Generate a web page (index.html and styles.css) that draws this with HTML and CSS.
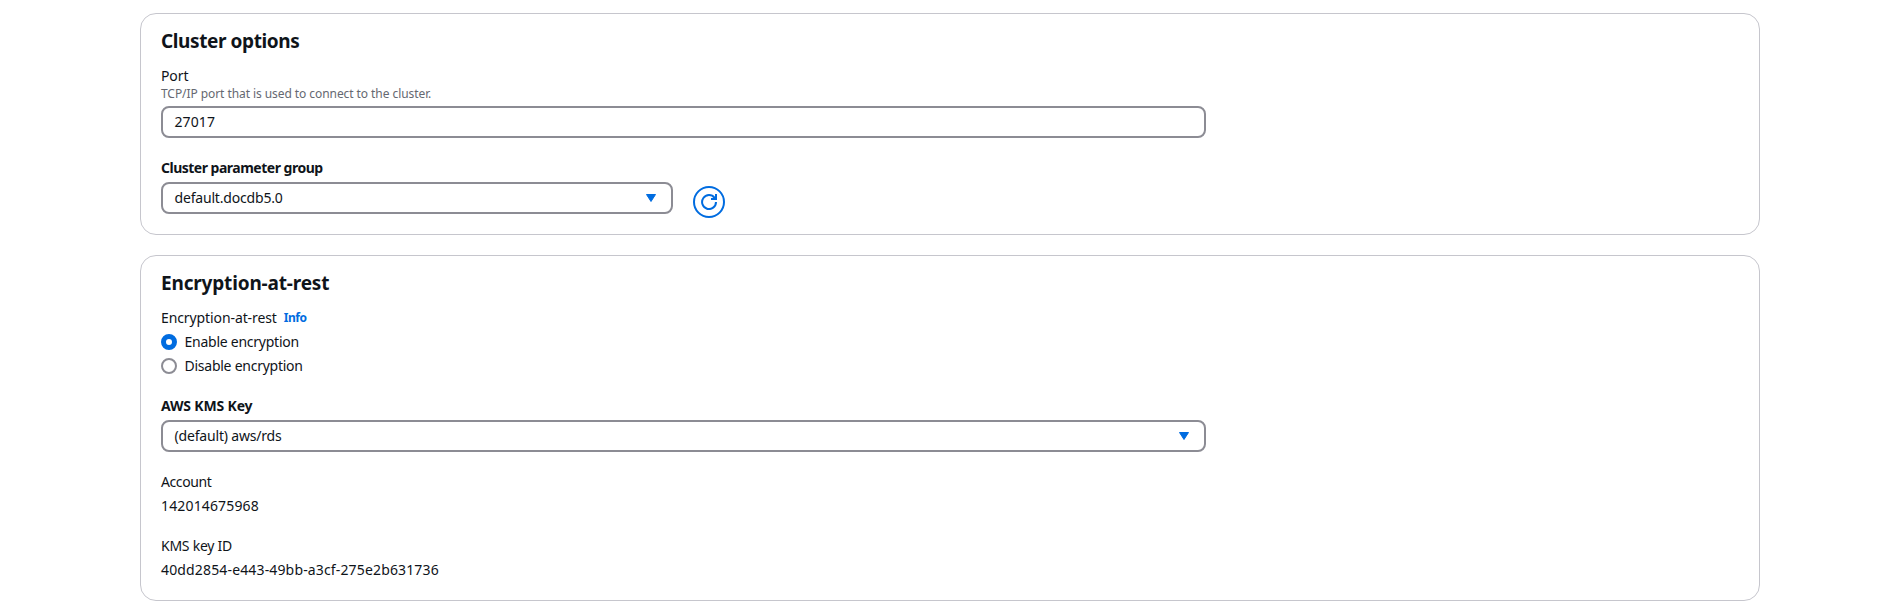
FILE: index.html
```html
<!DOCTYPE html>
<html lang="en">
<head>
<meta charset="utf-8">
<title>Create cluster</title>
<link rel="stylesheet" href="styles.css">
</head>
<body>
<main class="page">
  <section class="card card-options">
    <h2 class="title title-options">Cluster options</h2>
    <div class="field">
      <label class="label">Port</label>
      <p class="hint">TCP/IP port that is used to connect to the cluster.</p>
      <div class="control"><span class="digits">27017</span></div>
    </div>
    <div class="group-row">
      <div class="field group-field">
        <label class="label strong group-label">Cluster parameter group</label>
        <div class="control"><span>default.docdb5.0</span><svg class="caret" width="10" height="8" viewBox="0 0 10 8"><path d="M0.5 0.5h9L5 7.5z"/></svg></div>
      </div>
      <button class="refresh" aria-label="Refresh"><svg width="16" height="16" viewBox="0 0 16 16"><path d="M10 5h5V0"/><path d="M15 8a6.95 7 0 1 1-1.4-4.2L15 5"/></svg></button>
    </div>
  </section>
  <section class="card">
    <h2 class="title">Encryption-at-rest</h2>
    <div class="label encrypt-label"><span>Encryption-at-rest</span><a class="info">Info</a></div>
    <div class="radios">
      <div class="radio"><span class="dot checked"></span><span>Enable encryption</span></div>
      <div class="radio"><span class="dot"></span><span>Disable encryption</span></div>
    </div>
    <div class="field spaced">
      <label class="label strong">AWS KMS Key</label>
      <div class="control"><span>(default) aws/rds</span><svg class="caret" width="10" height="8" viewBox="0 0 10 8"><path d="M0.5 0.5h9L5 7.5z"/></svg></div>
    </div>
    <div class="pair spaced"><span class="account">Account</span><span class="digits">142014675968</span></div>
    <div class="pair spaced"><span class="key-name">KMS key ID</span><span class="digits">40dd2854-e443-49bb-a3cf-275e2b631736</span></div>
  </section>
</main>
</body>
</html>
```
FILE: styles.css
```css
* { box-sizing: border-box; }
body { margin: 0; background: #fff; color: #0f141a; font: 14px/20px "Noto Sans", sans-serif; }
.page { display: flex; flex-direction: column; gap: 20px; padding: 13px 137px 0 140px; }
.card { border: 1px solid #c6c6cd; border-radius: 16px; padding: 15px 20px 20px; }
.card-options { padding-bottom: 16px; }
.title { margin: 0 0 13px; font-size: 19px; line-height: 24px; font-weight: 700; letter-spacing: -0.17px; }
.title-options { letter-spacing: -0.4px; }
.field { width: 1045px; }
.label { display: block; line-height: 20px; letter-spacing: -0.1px; }
.strong { font-weight: 700; margin-bottom: 4px; letter-spacing: -0.17px; }
.group-label { letter-spacing: -0.5px; }
.hint { margin: 0 0 4px; font-size: 12px; line-height: 16px; letter-spacing: -0.07px; color: #656871; }
.control { display: flex; align-items: center; justify-content: space-between; height: 32px; padding: 0 15px 0 11.5px; border: 2px solid #8c8c94; border-radius: 8px; letter-spacing: -0.18px; }
.digits { letter-spacing: 0.15px; }
.control .digits { letter-spacing: 0.1px; }
.account { letter-spacing: -0.4px; }
.key-name { letter-spacing: -0.25px; }
.caret { fill: #006ce0; stroke: #006ce0; stroke-linejoin: round; }
.group-row { display: flex; align-items: flex-end; gap: 20px; margin-top: 20px; }
.group-field { width: 512px; padding-bottom: 4px; }
.refresh { display: flex; align-items: center; justify-content: center; width: 32px; height: 32px; padding: 0; border: 2px solid #006ce0; border-radius: 50%; background: #fff; }
.refresh svg { fill: none; stroke: #006ce0; stroke-width: 2; }
.encrypt-label { display: flex; gap: 7px; }
.info { color: #006ce0; font-size: 12px; font-weight: 700; letter-spacing: -0.5px; }
.radios { display: flex; flex-direction: column; gap: 4px; margin-top: 4px; letter-spacing: -0.25px; }
.radio { display: flex; align-items: center; gap: 7.5px; height: 20px; }
.dot { width: 16px; height: 16px; border: 2px solid #8c8c94; border-radius: 50%; }
.checked { border: 5px solid #006ce0; }
.spaced { margin-top: 20px; }
.pair { display: flex; flex-direction: column; align-items: flex-start; gap: 4px; }
```
